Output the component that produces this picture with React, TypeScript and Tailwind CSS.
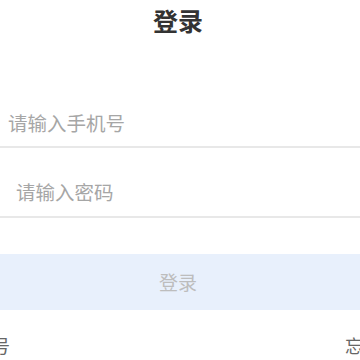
export default function App() {
  return (
    <div
      className="w-[360px] h-[360px] overflow-hidden bg-white"
      style={{ fontFamily: '"Noto Sans CJK SC", "Noto Sans", sans-serif' }}
    >
      {/* header */}
      <div className="h-[40px] flex items-center justify-center">
        <h1 className="text-[25px] font-bold text-[#333] leading-none mr-[4px]">登录</h1>
      </div>

      <div className="mt-[60px]">
        <div className="h-[48px] flex items-center pl-[8px] border-b-[2px] border-[#e8e8e8]">
          <input
            className="w-full outline-none text-[19.5px] text-[#333] placeholder:text-[#a6a6a6] bg-transparent"
            placeholder="请输入手机号"
          />
        </div>
        <div className="h-[70px] flex items-center pl-[16px] pt-[20px] border-b-[2px] border-[#e8e8e8]">
          <input
            type="password"
            className="w-full outline-none text-[19.5px] text-[#333] placeholder:text-[#a6a6a6] bg-transparent"
            placeholder="请输入密码"
          />
        </div>
      </div>

      <button className="mt-[36px] w-full h-[56px] bg-[#e8f0fc] text-[19px] text-[#bdbdbd] flex items-center justify-center pr-[4px]">
        登录
      </button>

      <div className="mt-[26px] ml-[-62px] w-[479px] flex justify-between text-[18px] text-[#666] leading-none">
        <span>注册账号</span>
        <span>忘记密码</span>
      </div>
    </div>
  );
}
